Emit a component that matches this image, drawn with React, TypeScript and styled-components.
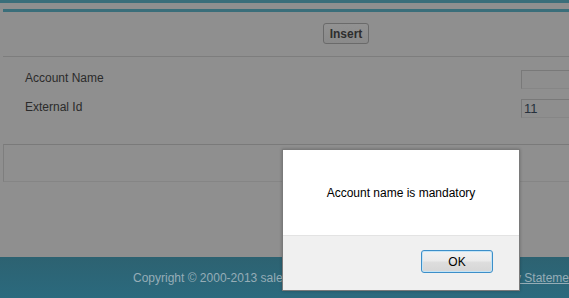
import React from "react";
import styled, { createGlobalStyle } from "styled-components";

const Global = createGlobalStyle`
  html, body { margin: 0; padding: 0; }
  body {
    background: #8f8f8f;
    font-family: "Liberation Sans", Arial, sans-serif;
    font-size: 12px;
    overflow: hidden;
    width: 569px;
    height: 298px;
  }
`;

const Page = styled.div`
  position: relative;
  width: 569px;
  height: 298px;
  display: flex;
  flex-direction: column;
  overflow: hidden;
`;

const TopStripe = styled.div`
  height: 3px;
  background: #3a6e7a;
  flex: none;
`;

const Content = styled.div`
  margin: 6px 0 0 3px;
  width: 686px;
  flex: none;
`;

const SectionBar = styled.div`
  height: 3px;
  background: #3a6e7a;
`;

const ButtonRow = styled.div`
  display: flex;
  justify-content: center;
  padding: 11px 0 12px;
  border-bottom: 1px solid #7d7d7d;
`;

const InsertButton = styled.button`
  height: 21px;
  width: 46px;
  padding: 0;
  border: 1px solid #6a6a6a;
  border-radius: 3px;
  background: linear-gradient(#929292, #8a8a8a);
  color: #2e2e2e;
  font: bold 12px "Liberation Sans", Arial, sans-serif;
`;

const Fields = styled.div`
  display: grid;
  grid-template-columns: 496px 1fr;
  row-gap: 10px;
  padding: 13px 0 26px 22px;
  align-items: center;
`;

const Label = styled.div`
  color: #2b2b2b;
  font-size: 12px;
  margin-top: -3px;
`;

const Input = styled.div`
  height: 19px;
  box-sizing: border-box;
  border: 1px solid #797979;
  border-bottom-color: #868686;
  background: #8e8e8e;
  color: #26313d;
  font-size: 13px;
  line-height: 17px;
  padding-left: 2px;
`;

const EmptyBox = styled.div`
  height: 36px;
  border: 1px solid #7e7e7e;
  border-top-color: #7a7a7a;
  border-bottom-color: #858585;
  border-right: none;
`;

const Spacer = styled.div`
  flex: 1;
`;

const Footer = styled.div`
  flex: none;
  height: 40px;
  background: linear-gradient(#2d6271, #2b6a7e);
  display: flex;
  align-items: center;
  padding-left: 133px;
  padding-top: 1px;
  white-space: nowrap;
  color: #96adb7;
  font-size: 12px;
`;

const FooterLink = styled.a`
  color: #96adb7;
  text-decoration: underline;
  margin-left: 13px;
`;

const Dialog = styled.div`
  position: absolute;
  left: 282px;
  top: 149px;
  width: 238px;
  height: 142px;
  box-sizing: border-box;
  border: 1px solid #7a7a7a;
  background: #ffffff;
  display: flex;
  flex-direction: column;
  box-shadow: 0 0 3px rgba(0, 0, 0, 0.25);
`;

const Message = styled.div`
  height: 84px;
  display: flex;
  align-items: center;
  justify-content: center;
  padding-top: 1px;
  color: #000;
  font-size: 12px;
`;

const DialogFooter = styled.div`
  flex: 1;
  background: #f0f0f0;
  border-top: 1px solid #e3e3e3;
  display: flex;
  justify-content: flex-end;
  align-items: flex-start;
  padding: 14px 26px 0 0;
`;

const OkButton = styled.button`
  width: 72px;
  height: 23px;
  padding: 0;
  border: 1px solid #3c8fc9;
  border-radius: 3px;
  background: linear-gradient(#f2f2f2 0%, #ebebeb 45%, #dddddd 55%, #d6d6d6 100%);
  box-shadow: inset 0 0 0 1px #c4e4f6;
  color: #000;
  font: 12px "Liberation Sans", Arial, sans-serif;
`;

export default function App() {
  return (
    <>
      <Global />
      <Page>
        <TopStripe />
        <Content>
          <SectionBar />
          <ButtonRow>
            <InsertButton>Insert</InsertButton>
          </ButtonRow>
          <Fields>
            <Label>Account Name</Label>
            <Input />
            <Label>External Id</Label>
            <Input>11</Input>
          </Fields>
          <EmptyBox />
        </Content>
        <Spacer />
        <Footer>
          <span>Copyright © 2000-2013 salesforce.com, inc. All rights reserved.</span>
          <FooterLink>Privacy Statement</FooterLink>
        </Footer>
        <Dialog>
          <Message>Account name is mandatory</Message>
          <DialogFooter>
            <OkButton>OK</OkButton>
          </DialogFooter>
        </Dialog>
      </Page>
    </>
  );
}
